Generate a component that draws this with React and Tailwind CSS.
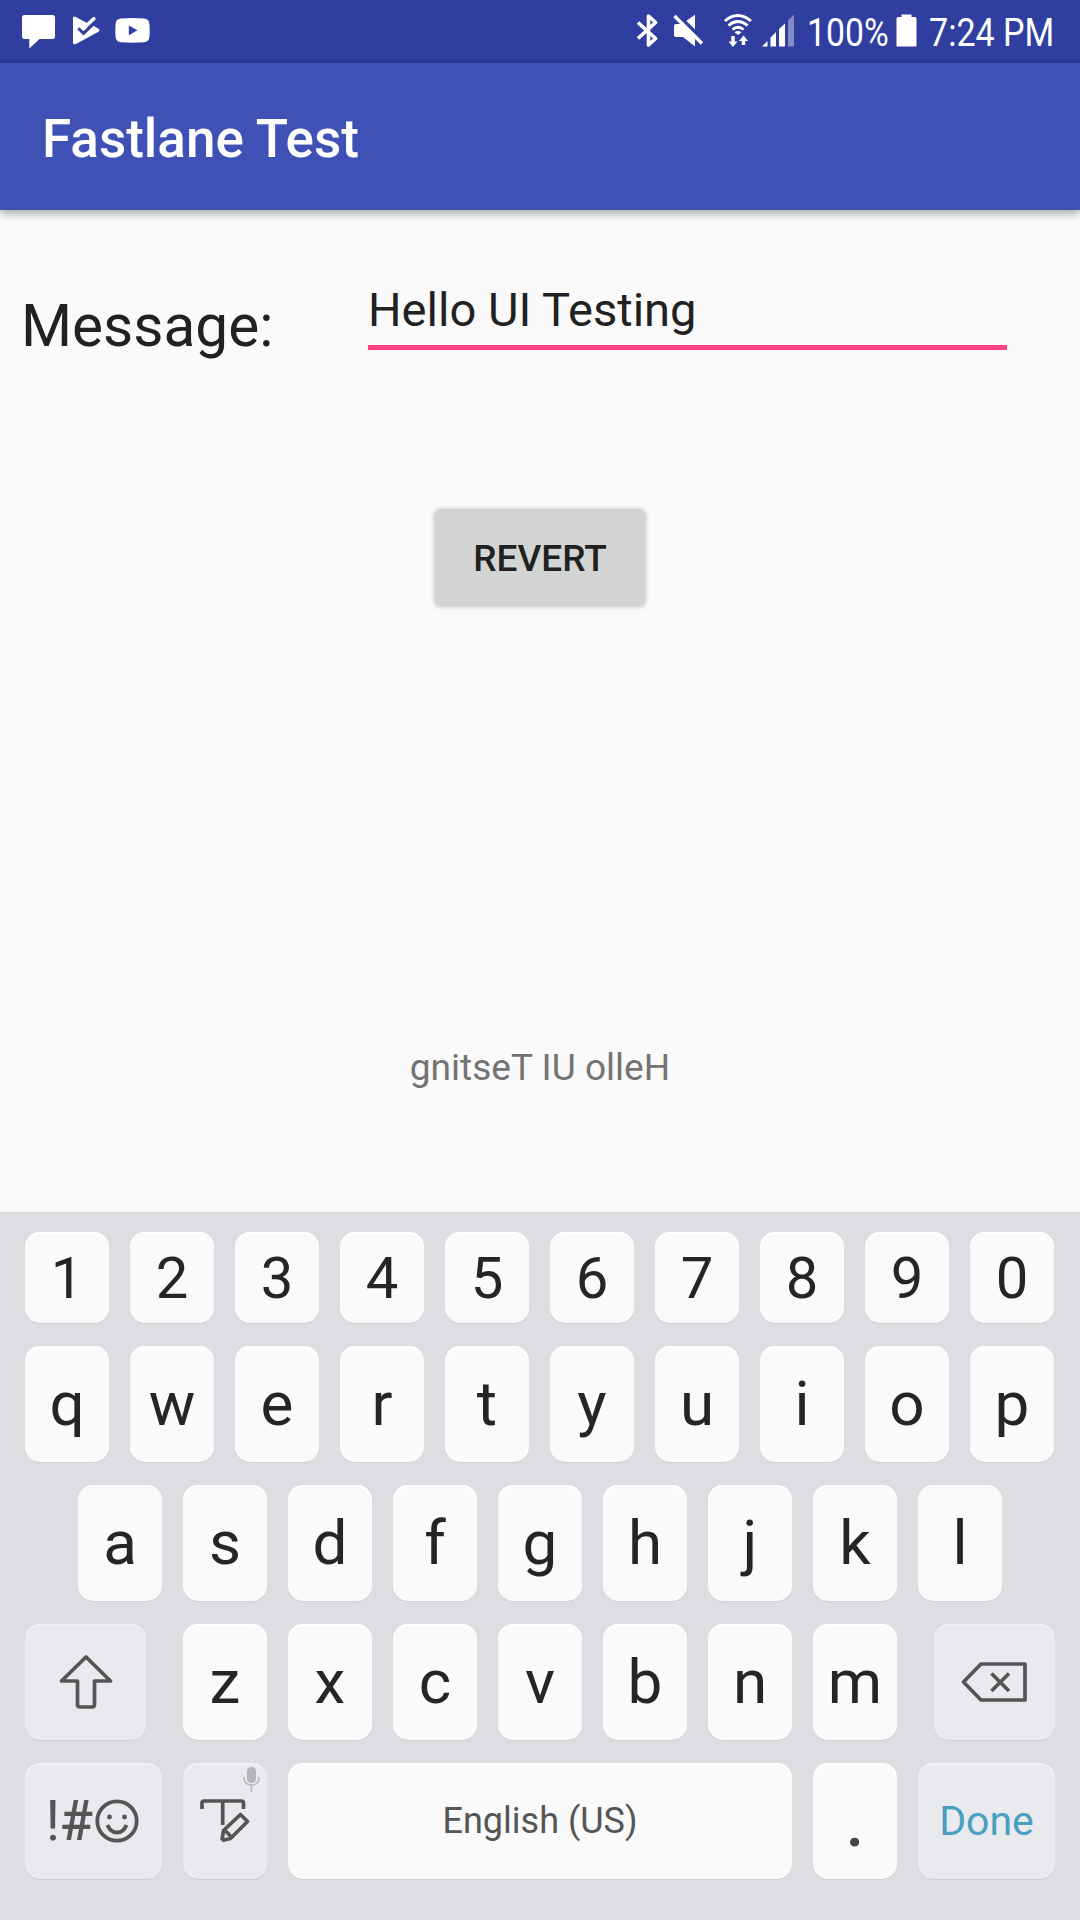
const KEY = "flex shrink-0 items-center justify-center rounded-[15px] shadow-[0_1px_1px_#cfd0d3,inset_0_2px_1px_#ffffff]";
const LIGHT = `${KEY} bg-[#fafafa] text-[#252525]`;
const GREY = "flex shrink-0 items-center justify-center rounded-[15px] bg-[#e9eaee] text-[#555555] shadow-[0_1px_1px_#cfd0d3,inset_0_2px_1px_#f0f1f4]";

function Letter({ children }) {
  return <div className={`${LIGHT} h-[116px] w-[84px] pb-[2px] text-[62px]`}>{children}</div>;
}

function StatusBar() {
  return (
    <header className="flex h-[63px] items-start bg-[#303f9f] text-white">
      <svg className="ml-[22px] mt-[15px]" width="33" height="34" viewBox="0 0 33 34" fill="currentColor">
        <path d="M2.500 0H30.500Q33 0 33 2.500V21.500Q33 24 30.500 24H17.500L7.300 33.500V24H2.500Q0 24 0 21.500V2.500Q0 0 2.500 0Z" />
      </svg>
      <svg className="ml-[18px] mt-[16px]" width="27" height="29" viewBox="0 0 27 29">
        <path d="M0 2Q0-.3 2.300.8L13.500 6.800L14 12L20.500 9.800L25.500 12.800Q27.500 14.200 25.500 15.700L3 28Q0 29.200 0 26.500Z" fill="white" />
        <path d="M5.300 12.200L10.500 17.300L21 7.300" fill="none" stroke="#303f9f" strokeWidth="3" />
        <path d="M10.500 12.300L20.800 2.700" fill="none" stroke="white" strokeWidth="3.600" strokeLinecap="round" />
      </svg>
      <svg className="ml-[15px] mt-[18px]" width="35" height="25" viewBox="0 0 35 25">
        <path d="M6 .6Q17.500-.5 29 .6Q34 .8 34.400 6Q35 12.500 34.400 19Q34 24 29 24.300Q17.500 25.200 6 24.300Q1 24 .6 19Q0 12.500.6 6Q1 .8 6 .6Z" fill="white" />
        <path d="M13.800 7.500V17.200L22.500 12.300Z" fill="#303f9f" />
      </svg>
      <svg className="ml-[487px] mt-[14px]" width="21" height="33" viewBox="0 0 21 33" fill="none" stroke="white" strokeWidth="3.600" strokeLinejoin="round">
        <path d="M1 8.500L18.600 24.500L11.500 31V2L18.600 8.500L1 24.500" />
      </svg>
      <svg className="ml-[15px] mt-[14px]" width="31" height="33" viewBox="0 0 31 33">
        <path d="M3 10H9L22 .7V32.500L10 23H3Q1 23 1 21V12Q1 10 3 10Z" fill="white" />
        <path d="M3.500 0L31 27" stroke="#303f9f" strokeWidth="4" />
        <path d="M1.500 2L29 29.500" stroke="white" strokeWidth="3.400" />
      </svg>
      <svg className="ml-[20px] mt-[14px]" width="28" height="34" viewBox="0 0 28 34" fill="none" stroke="white">
        <path d="M1 7Q13.500-4 27 7M4.500 11.500Q13.500 3.500 23.500 11.500M8.500 15.500Q14 11 19.500 15.500" strokeWidth="2.900" />
        <path d="M10.500 18.200Q14 15.800 17.500 18.200L14 21Z" fill="white" stroke="none" />
        <path d="M9 22V29M19.500 31V26" strokeWidth="3.400" />
        <path d="M4.500 27.500H13.500L9 33ZM15 27H24L19.500 21.500Z" fill="white" stroke="none" />
      </svg>
      <svg className="ml-[10px] mt-[14px]" width="33" height="33" viewBox="0 0 33 33" fill="white">
        <path d="M0 32.500L5.500 27V32.500ZM8.500 32.500V23.500L14 18V32.500ZM17 32.500V15L23 9.500V32.500Z" />
        <path d="M26 32.500V6.500L32 .5V32.500Z" opacity=".4" />
      </svg>
      <div className="ml-[12px] w-[87px] whitespace-nowrap text-[39px] leading-[66px]"><span className="inline-block origin-left scale-x-[.865]">100%</span></div>
      <svg className="ml-[2px] mt-[14px]" width="21" height="33" viewBox="0 0 21 33" fill="white">
        <path d="M5.500 .5H15.500V3H19Q20.500 3 20.500 4.500V32.500H.5V4.500Q.5 3 2 3H5.500Z" />
      </svg>
      <div className="ml-[12px] whitespace-nowrap text-[39px] leading-[66px]"><span className="inline-block origin-left scale-x-[.873]">7:24 PM</span></div>
    </header>
  );
}

function Keyboard() {
  return (
    <section className="flex h-[708px] flex-col gap-[23px] border-t border-[#d5d6d9] bg-[#dddee2] px-[25px] pt-[19px]">
      <div className="flex gap-[21px]">
        {[..."1234567890"].map((n) => (
          <div key={n} className={`${LIGHT} h-[91px] w-[84px] pt-px text-[58px]`}>{n}</div>
        ))}
      </div>
      <div className="flex gap-[21px]">{[..."qwertyuiop"].map((c) => <Letter key={c}>{c}</Letter>)}</div>
      <div className="flex justify-center gap-[21px]">{[..."asdfghjkl"].map((c) => <Letter key={c}>{c}</Letter>)}</div>
      <div className="flex justify-between">
        <div className={`${GREY} h-[116px] w-[121px]`}>
          <svg width="54" height="56" viewBox="0 0 54 56" fill="none" stroke="currentColor" strokeWidth="3.700" strokeLinejoin="round">
            <path d="M27 3L51.500 27H35.500V50.500Q35.500 53 33 53H21Q18.500 53 18.500 50.500V27H2.500Z" />
          </svg>
        </div>
        <div className="flex gap-[21px]">{[..."zxcvbnm"].map((c) => <Letter key={c}>{c}</Letter>)}</div>
        <div className={`${GREY} h-[116px] w-[121px]`}>
          <svg className="mr-px" width="66" height="42" viewBox="0 0 66 42" fill="none" stroke="currentColor" strokeWidth="3.700" strokeLinejoin="round">
            <path d="M2.500 21L20 3H64V39H20Z" />
            <path d="M30.500 12.500L48 30M48 12.500L30.500 30" />
          </svg>
        </div>
      </div>
      <div className="flex gap-[21px]">
        <div className={`${GREY} h-[116px] w-[137px] pr-[2px]`}>
          <span className="text-[55px]">!<span className="font-medium">#</span></span>
          <svg className="ml-[2px]" width="44" height="44" viewBox="0 0 44 44" fill="none" stroke="currentColor" strokeWidth="3.800">
            <circle cx="22" cy="22" r="19.700" />
            <path d="M12.500 26Q15.500 33.500 22 33.500T31.500 26" />
            <circle cx="14.500" cy="18" r="2.400" fill="currentColor" stroke="none" />
            <circle cx="29.500" cy="18" r="2.400" fill="currentColor" stroke="none" />
          </svg>
        </div>
        <div className={`${GREY} h-[116px] w-[84px]`}>
          <svg width="84" height="116" viewBox="0 0 84 116" fill="none" stroke="currentColor" strokeWidth="3.700" strokeLinejoin="round">
            <path d="M19 46V40Q19 38 21 38H58.500Q60.500 38 60.500 40V46M39.700 38V62" />
            <path d="M39 77.500L40.500 67.500L57.500 51.500L64.500 58.500L47.500 75.500L39 77.500M41.500 67L49 74.500" />
            <rect x="64" y="4" width="9" height="16" rx="4.500" fill="#b5b6b8" stroke="none" />
            <path d="M61 14Q61 22 68.500 22T76 14M68.500 22V29" stroke="#b5b6b8" strokeWidth="1.500" />
          </svg>
        </div>
        <div className={`${LIGHT} h-[116px] w-[504px]`}><span className="text-[36px] text-[#555555]">English (US)</span></div>
        <div className={`${LIGHT} h-[116px] w-[84px] pt-[5px] text-[66px]`}><span className="font-medium text-[#454545]">.</span></div>
        <div className={`${GREY} h-[116px] w-[137px] pt-px`}><span className="text-[41px] text-[#489fc0]">Done</span></div>
      </div>
    </section>
  );
}

export default function App() {
  return (
    <div className="flex h-[1920px] w-[1080px] flex-col overflow-hidden bg-[#fafafa] font-['Roboto',sans-serif] text-[#212121]">
      <StatusBar />
      <div className="z-10 flex h-[147px] shrink-0 items-center bg-[#3f51b5] pl-[42px] pt-[7px] text-[53px] font-medium text-white shadow-[0_3px_9px_rgba(0,0,0,0.36)]">Fastlane Test</div>
      <main className="flex h-[1002px] shrink-0 flex-col items-center">
        <div className="flex h-[143px] w-full items-start">
          <label className="ml-[21px] w-[347px] pt-[81px] text-[58.500px] leading-[70px]">Message:</label>
          <div className="mt-[60px] h-[80px] w-[639px] border-b-[5px] border-[#ff4081] pt-[10px] text-[47.100px] leading-[60px]">Hello UI Testing</div>
        </div>
        <button className="mt-[156px] h-[96px] w-[210px] rounded-[5px] bg-[#d3d5d4] pt-[4px] text-[37px] font-medium shadow-[0_1px_5px_rgba(0,0,0,0.3)]">REVERT</button>
        <p className="mt-[433px] text-[37.100px] leading-[60px] text-[#737373]">gnitseT IU olleH</p>
      </main>
      <Keyboard />
    </div>
  );
}
